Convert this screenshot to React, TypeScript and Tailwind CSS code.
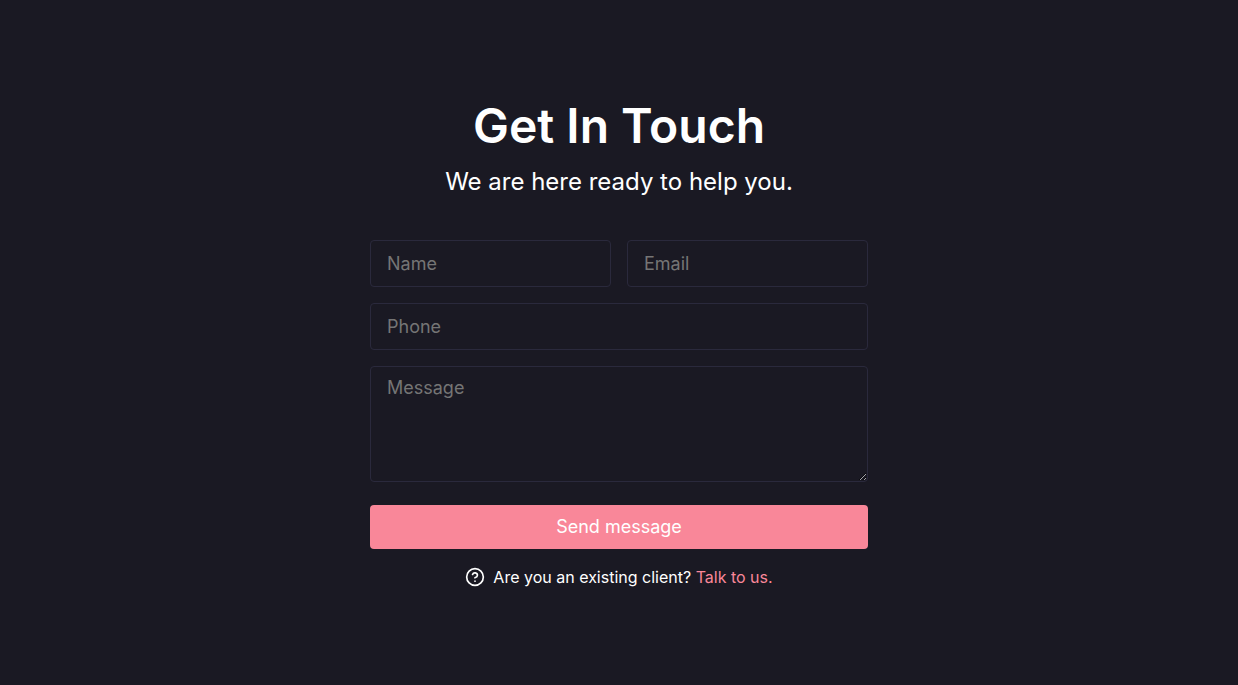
export default function App() {
  const field =
    "w-full rounded border border-[#2a293c] bg-transparent px-4 text-lg leading-7 text-white placeholder:text-[#757575] focus:border-[#f98799] focus:outline-none";
  return (
    <main className="flex min-h-screen flex-col items-center justify-center bg-[#1a1923] px-4 font-['Inter',sans-serif] text-white">
      <section className="w-full max-w-[498px]">
        <h1 className="text-center text-5xl leading-[60px] font-semibold">Get In Touch</h1>
        <p className="mt-2 text-center text-2xl leading-9">We are here ready to help you.</p>
        <form className="mt-10" onSubmit={(e) => e.preventDefault()}>
          <div className="flex flex-col gap-4">
            <div className="grid grid-cols-2 gap-4">
              <input aria-label="Name" name="name" placeholder="Name" className={`${field} h-[47px]`} />
              <input aria-label="Email" name="email" type="email" placeholder="Email" className={`${field} h-[47px]`} />
            </div>
            <input aria-label="Phone" name="phone" type="tel" placeholder="Phone" className={`${field} h-[47px]`} />
            <textarea aria-label="Message" name="message" placeholder="Message" className={`${field} block h-[116px] resize py-[7px]`} />
          </div>
          <button type="submit" className="mt-[23px] h-11 w-full rounded bg-[#f98799] text-lg">
            Send message
          </button>
        </form>
        <p className="mt-4 flex items-center justify-center gap-2 text-base leading-6">
          <svg aria-hidden="true" viewBox="0 0 24 24" className="size-5" fill="none" stroke="currentColor" strokeWidth="2" strokeLinecap="round" strokeLinejoin="round">
            <circle cx="12" cy="12" r="10" />
            <path d="M9.09 9a3 3 0 0 1 5.83 1c0 2-3 3-3 3" />
            <path d="M12 17h.01" />
          </svg>
          <span>
            Are you an existing client?{" "}
            <a href="#contact" className="text-[#f98799]">Talk to us.</a>
          </span>
        </p>
      </section>
    </main>
  );
}
